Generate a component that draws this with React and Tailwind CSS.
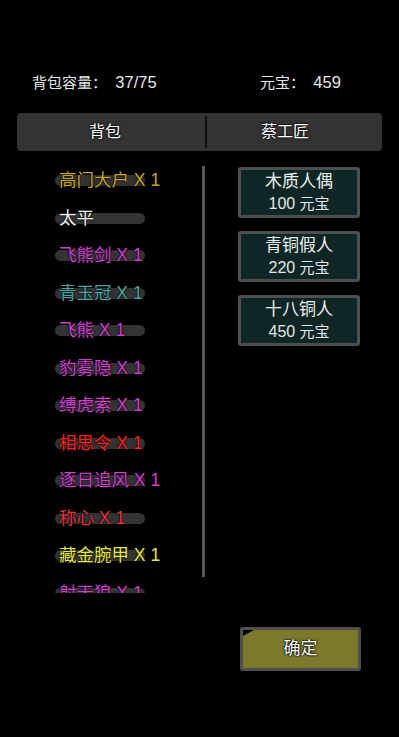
import React from "react";

const items = [
  { name: "高门大户", count: "X 1", color: "text-[#c9a227]" },
  { name: "太平", count: "", color: "text-[#f2f2f2]" },
  { name: "飞熊剑", count: "X 1", color: "text-[#d23dd2]" },
  { name: "青玉冠", count: "X 1", color: "text-[#4aa6a6]" },
  { name: "飞熊", count: "X 1", color: "text-[#d23dd2]" },
  { name: "豹雾隐", count: "X 1", color: "text-[#d23dd2]" },
  { name: "缚虎索", count: "X 1", color: "text-[#d23dd2]" },
  { name: "相思令", count: "X 1", color: "text-[#ff1f1f]" },
  { name: "逐日追风", count: "X 1", color: "text-[#d23dd2]" },
  { name: "称心", count: "X 1", color: "text-[#e3323c]" },
  { name: "藏金腕甲", count: "X 1", color: "text-[#e8e83c]" },
  { name: "射天狼", count: "X 1", color: "text-[#d23dd2]" },
];

const shop = [
  { name: "木质人偶", price: "100", unit: "元宝" },
  { name: "青铜假人", price: "220", unit: "元宝" },
  { name: "十八铜人", price: "450", unit: "元宝" },
];

export default function App() {
  return (
    <div
      className="w-[399px] h-[737px] bg-black overflow-hidden text-[#e6e6e6]"
      style={{ fontFamily: '"Liberation Sans", "Noto Sans CJK SC", sans-serif' }}
    >
      {/* header */}
      <div className="flex items-center h-[20px] mt-[72px] text-[15px] leading-none">
        <div className="ml-[32px] w-[228px] whitespace-pre">
          背包容量：  <span className="text-[16.5px]">37/75</span>
        </div>
        <div className="whitespace-pre">
          元宝：  <span className="text-[16.5px]">459</span>
        </div>
      </div>

      {/* tabs */}
      <div className="mx-[17px] mt-[21px] h-[38px] bg-[#333333] rounded-[4px] flex items-center text-[16px] text-white [text-shadow:0_0_2px_#000,0_0_2px_#000]">
        <div className="w-[176px] text-center">背包</div>
        <div className="ml-[12px] w-[2px] h-[32px] bg-[#0d0d0d]" />
        <div className="w-[156px] text-center">蔡工匠</div>
      </div>

      {/* main */}
      <div className="flex mt-[10px]">
        <div className="ml-[55px] w-[147px] h-[432px] overflow-hidden flex flex-col">
          {items.map((it, i) => (
            <div key={i} className="h-[37.5px] shrink-0 flex items-center">
              <div className="grid items-center">
                <div className="col-start-1 row-start-1 w-[90px] h-[11px] mt-[2px] rounded-full bg-[#333333]" />
                <div
                  className={`col-start-1 row-start-1 pl-[4px] pt-[2px] text-[17.5px] leading-none whitespace-pre ${it.color} [text-shadow:0_0_2px_#000,0_0_1px_#000]`}
                >
                  {it.name}
                  {it.count ? " " + it.count : ""}
                </div>
              </div>
            </div>
          ))}
        </div>
        <div className="w-[3px] h-[411px] mt-[5px] bg-[#575757]" />
        <div className="ml-[33px] mt-[6px] flex flex-col gap-[13px]">
          {shop.map((s, i) => (
            <div
              key={i}
              className="w-[122px] h-[51px] border-[3px] border-[#4f4f4f] rounded-[3px] bg-[#0e2626] flex flex-col items-center justify-center"
            >
              <div className="text-[17px] leading-none text-[#f0f0f0]">{s.name}</div>
              <div className="text-[15px] leading-none mt-[6px] text-[#e6e6e6] whitespace-pre">
                <span className="text-[16px]">{s.price}</span> {s.unit}
              </div>
            </div>
          ))}
        </div>
      </div>

      {/* confirm */}
      <div className="mt-[34px] ml-[240px] w-[121px] h-[44px] border-[3px] border-[#4f4f4f] rounded-[3px] bg-black">
        <div className="w-full h-full bg-[#7b792c] [clip-path:polygon(11px_0,100%_0,100%_100%,0_100%,0_6px)] flex items-center justify-center text-[17px] text-white [text-shadow:0_0_2px_#000,0_0_2px_#000,0_0_1px_#000]">
          确定
        </div>
      </div>
    </div>
  );
}
